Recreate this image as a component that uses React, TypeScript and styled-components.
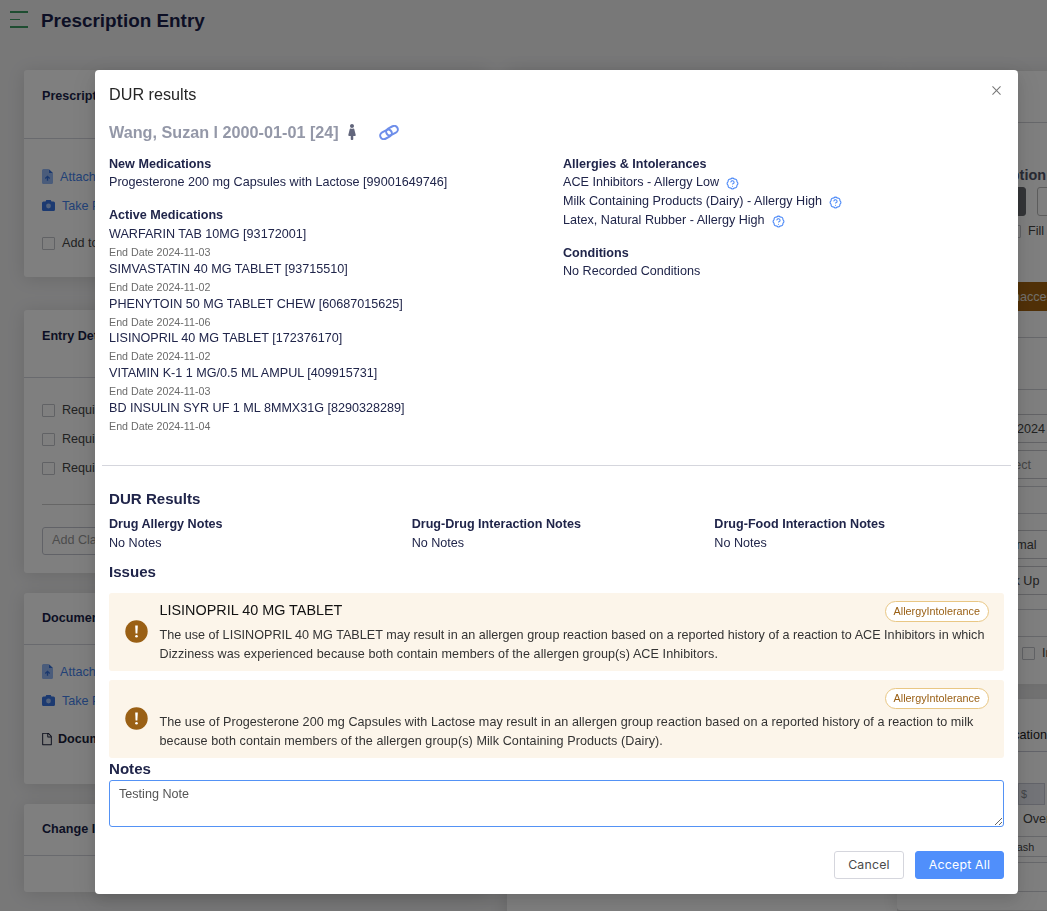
import React from 'react';
import styled, { createGlobalStyle, css } from 'styled-components';
import { FaFemale } from 'react-icons/fa';
import { AiOutlineClose, AiOutlineFile } from 'react-icons/ai';
import { BadgeQuestionMark } from 'lucide-react';

const sans = "'Liberation Sans', Helvetica, Arial, sans-serif";
const inter = "Inter, 'Liberation Sans', sans-serif";

const GlobalStyle = createGlobalStyle`
  * { box-sizing: border-box; }
  body {
    margin: 0;
    font-family: ${sans};
    font-size: 12.6px;
    color: #20254a;
    background: #f0f0f1;
    overflow: hidden;
    -webkit-font-smoothing: antialiased;
  }
  p, h1, h2, h3, h4 { margin: 0; }
`;

/* ---------- page behind the dialog ---------- */

const Page = styled.div`
  height: 911px;
  overflow: hidden;
  background: #f0f0f1;
`;

const TopBar = styled.header`
  display: flex;
  align-items: center;
  height: 40px;
  padding-left: 10px;
  gap: 13px;
`;

const PageTitle = styled.h1`
  padding-top: 1px;
  font-size: 18.9px;
  line-height: 24px;
  font-weight: 700;
  color: #1a1f4a;
`;

const Workspace = styled.main`
  display: grid;
  grid-template-columns: 483px 390px 400px;
  padding: 30px 0 0 24px;
  align-items: start;
`;

const Column = styled.div<{ $gap?: number; $top?: number; $right?: number }>`
  display: flex;
  flex-direction: column;
  gap: ${(p) => p.$gap ?? 20}px;
  padding-top: ${(p) => p.$top ?? 0}px;
  padding-right: ${(p) => p.$right ?? 0}px;
`;

const Card = styled.section<{ $height: number }>`
  height: ${(p) => p.$height}px;
  flex: none;
  overflow: hidden;
  background: #fff;
  border-radius: 3px;
  box-shadow: 0 2px 18px rgba(0, 0, 0, 0.12);
`;

const CardHead = styled.div<{ $height: number; $pad?: number }>`
  height: ${(p) => p.$height}px;
  padding: ${(p) => p.$pad ?? 17}px 0 0 18px;
  border-bottom: 1px solid #d3d4dc;
  font-weight: 700;
  line-height: 18px;
  color: #1a1f4a;
`;

const CardBody = styled.div<{ $top: number }>`
  display: flex;
  flex-direction: column;
  padding: ${(p) => p.$top}px 18px 0;
`;

const ActionLink = styled.a`
  display: flex;
  align-items: center;
  gap: 7px;
  height: 29px;
  color: #4583ee;
`;

const CheckLine = styled.label<{ $top?: number }>`
  display: flex;
  align-items: center;
  gap: 7px;
  height: 29px;
  margin-top: ${(p) => p.$top ?? 0}px;
  line-height: 13px;
  color: #444;
  white-space: nowrap;
`;

const Box = styled.span`
  width: 13px;
  height: 13px;
  flex: none;
  border: 1px solid #c3c5cb;
  border-radius: 1px;
`;

const Rule = styled.hr`
  width: 100%;
  height: 1px;
  margin: 21px 0 22px;
  border: 0;
  background: #ccc;
`;

const Field = styled.div`
  height: 28px;
  padding-left: 9px;
  border: 1px solid #c3c5cf;
  border-radius: 3px;
  line-height: 24px;
  color: #999;
`;

const DocHeading = styled.div`
  display: flex;
  align-items: center;
  gap: 4px;
  margin: 14px 0 0 -2px;
  height: 20px;
  font-weight: 700;
  color: #1a1f3a;
`;

const Slot = styled.div<{ $h: number; $left?: number; $bottom?: number; $line?: boolean; $small?: boolean }>`
  display: flex;
  align-items: center;
  height: ${(p) => p.$h}px;
  padding-left: ${(p) => p.$left ?? 0}px;
  padding-bottom: ${(p) => p.$bottom ?? 0}px;
  font-size: ${(p) => (p.$small ? 10.8 : 12.6)}px;
  white-space: nowrap;
  color: #444;
  ${(p) => p.$line && css`border-bottom: 1px solid #cfd0d6;`}
`;

const FormField = styled.div<{ $left: number; $muted?: boolean; $gap?: number }>`
  display: flex;
  align-items: center;
  height: 29px;
  margin-bottom: ${(p) => p.$gap ?? 7}px;
  padding-left: ${(p) => p.$left}px;
  border: 1px solid #c6c7cc;
  white-space: nowrap;
  color: ${(p) => (p.$muted ? '#8c8c8c' : '#444')};
`;

const OptionHeading = styled.div`
  height: 22px;
  padding-left: 65px;
  font-size: 14.4px;
  line-height: 20px;
  font-weight: 700;
  color: #515568;
`;

const CardLabel = styled.div`
  height: 53px;
  padding: 27px 0 0 89px;
  border-bottom: 1px solid #c6c8d4;
  line-height: 18px;
  color: #222;
`;

const Toggles = styled.div`
  display: flex;
  gap: 11px;
  height: 29px;
  padding-left: 70px;
`;

const Toggle = styled.span<{ $on?: boolean }>`
  width: 59px;
  border-radius: 3px;
  border: 1px solid ${(p) => (p.$on ? '#686b70' : '#bbb')};
  background: ${(p) => (p.$on ? '#686b70' : '#fff')};
`;

const Banner = styled.div`
  height: 29px;
  margin-bottom: 26px;
  padding-left: 116px;
  line-height: 30px;
  background: #a3620f;
  color: #e6e0da;
  white-space: nowrap;
`;

const Currency = styled.span`
  display: flex;
  align-items: center;
  width: 27px;
  height: 22px;
  margin-left: 121px;
  padding-left: 2px;
  border: 1px solid #c6c9d4;
  background: #e7e9f0;
  color: #85888f;
  font-size: 10.8px;
`;

/* ---------- dialog ---------- */

const Backdrop = styled.div`
  position: fixed;
  inset: 0;
  padding: 70px 0 0 95px;
  background: rgba(0, 0, 0, 0.5);
`;

const Dialog = styled.div`
  width: 923px;
  height: 824px;
  padding: 0 14px;
  border-radius: 4px;
  background: #fff;
  box-shadow: 0 5px 14px rgba(0, 0, 0, 0.1), 0 8px 26px 8px rgba(0, 0, 0, 0.06);
`;

const DialogHead = styled.div`
  display: flex;
  justify-content: space-between;
  align-items: flex-start;
  height: 50px;
  padding-top: 13px;
  color: #262626;
  font-size: 16.2px;
  line-height: 22px;
  svg { width: 13px; height: 13px; margin: 1px 1px 0 0; color: #777; }
`;

const Patient = styled.div`
  display: flex;
  align-items: center;
  height: 25px;
  margin-bottom: 9px;
  font-size: 16.2px;
  font-weight: 700;
  color: #9498a8;
`;

const PersonIcon = styled(FaFemale)`
  width: 8px;
  height: 16px;
  margin: -1px 0 0 9px;
  color: #62667c;
`;

const Columns = styled.div<{ $count: number; $height: number; $top?: number }>`
  display: grid;
  grid-template-columns: repeat(${(p) => p.$count}, 1fr);
  margin: ${(p) => p.$top ?? 0}px -13px 0 0;
  height: ${(p) => p.$height}px;
`;

const Group = styled.div`
  margin-bottom: 13px;
`;

const NoteGroup = styled.div`
  display: flex;
  flex-direction: column;
  gap: 1px;
`;

const Heading = styled.h4`
  padding-top: 2px;
  font-size: 12.6px;
  font-weight: 700;
  line-height: 17px;
`;

const Line = styled.p`
  display: flex;
  align-items: center;
  height: 19px;
  line-height: 19px;
  svg { margin: 2px 0 0 7px; color: #4a88f7; }
`;

const MedicationList = styled.div`
  padding-top: 1px;
`;

const Medication = styled.div`
  height: 34.75px;
  line-height: 18px;
`;

const EndDate = styled.p`
  padding-top: 2.2px;
  font-size: 10.7px;
  line-height: 14.7px;
  color: #6b6b6b;
`;

const Divider = styled.hr`
  height: 1px;
  margin: 0 -7px 21px;
  border: 0;
  background: #d5d6dd;
`;

const SectionTitle = styled.h3<{ $h: number; $bottom?: number }>`
  margin-bottom: ${(p) => p.$bottom ?? 0}px;
  font-size: 15.1px;
  font-weight: 700;
  line-height: ${(p) => p.$h}px;
`;

const Issue = styled.article`
  display: flex;
  height: 78px;
  margin-bottom: 9px;
  padding: 8px 15px 0 16px;
  border-radius: 3px;
  background: #fcf5ea;
  color: #333;
  &:last-child { margin-bottom: 0; }
`;

const WarningMark = styled.svg`
  flex: none;
  width: 23px;
  height: 23px;
  margin: 19px 11.5px 0 0;
`;

const IssueBody = styled.div`
  flex: 1;
`;

const IssueTop = styled.div`
  display: flex;
  justify-content: space-between;
  height: 25px;
  font-size: 14.4px;
  line-height: 18px;
  color: #111;
`;

const Tag = styled.span`
  height: 21px;
  margin-left: auto;
  padding: 0 8px;
  border: 1px solid #e9c784;
  border-radius: 11px;
  background: #fff;
  color: #9a6015;
  font-size: 10.8px;
  line-height: 19px;
`;

const IssueText = styled.p<{ $tracking: number }>`
  line-height: 19px;
  letter-spacing: ${(p) => p.$tracking}px;
  white-space: nowrap;
`;

const NotesInput = styled.textarea`
  display: block;
  width: 895px;
  height: 47px;
  padding: 4px 9px;
  border: 1px solid #5492f5;
  border-radius: 3px;
  outline: none;
  font: 12.6px/18px ${sans};
  color: #555;
`;

const Actions = styled.footer`
  display: flex;
  justify-content: flex-end;
  gap: 11px;
  margin-top: 24px;
`;

const Button = styled.button<{ $primary?: boolean }>`
  width: ${(p) => (p.$primary ? 89 : 70)}px;
  height: 28px;
  padding: 0;
  border: 1px solid ${(p) => (p.$primary ? '#508ffb' : '#d5d6dd')};
  border-radius: 3px;
  background: ${(p) => (p.$primary ? '#508ffb' : '#fff')};
  color: ${(p) => (p.$primary ? '#fff' : '#4a4a4a')};
  font: 400 12.3px/24px ${inter};
  letter-spacing: 0.22px;
`;

const MenuIcon = () => (
  <svg width="18" height="18" viewBox="0 0 18 18" stroke="#3c9a63">
    <path d="M0 1h18M0 16h18" strokeWidth="1.800" />
    <path d="M0 8.500h10" strokeWidth="1" />
  </svg>
);

const Chain = styled.svg`
  width: 20px;
  height: 15px;
  margin-left: 23px;
`;

const ChainIcon = () => (
  <Chain viewBox="0 0 20 15" fill="none" stroke="#6e8eea" strokeWidth="2">
    <rect x="0.900" y="5.800" width="12.200" height="7.200" rx="3.600" transform="rotate(-28 7 9.400)" />
    <rect x="6.900" y="2" width="12.200" height="7.200" rx="3.600" transform="rotate(-28 13 5.600)" />
  </Chain>
);

const WarningIcon = () => (
  <WarningMark viewBox="0 0 23 23">
    <circle cx="11.500" cy="11.500" r="11.200" fill="#9a6015" />
    <path d="M10.200 5.500h2.600l-.4 8h-1.800z" fill="#fff" />
    <circle cx="11.500" cy="16.300" r="1.300" fill="#fff" />
  </WarningMark>
);

const UploadIcon = () => (
  <svg width="11" height="15" viewBox="0 0 11 15">
    <path d="M1.500 0H6.500v4H11v9.500a1.500 1.500 0 0 1-1.500 1.500h-8A1.500 1.500 0 0 1 0 13.500v-12A1.500 1.500 0 0 1 1.500 0z" fill="#94b8f6" />
    <path d="M6.700 0 11 4H6.700z" fill="#3571dc" />
    <path d="M5.500 11.700V7.500M3.300 9.500l2.200-2.200 2.200 2.200" fill="none" stroke="#3571dc" strokeWidth="1.300" />
  </svg>
);

const CameraIcon = () => (
  <svg width="13" height="11" viewBox="0 0 13 11">
    <path d="M1.500 1.500h2L4.300 0h4.400l.8 1.500h2A1.500 1.500 0 0 1 13 3v6.500a1.500 1.500 0 0 1-1.500 1.500h-10A1.500 1.500 0 0 1 0 9.500V3a1.500 1.500 0 0 1 1.500-1.500z" fill="#3875e2" />
    <circle cx="6.500" cy="6" r="2.400" fill="#a9c6f8" />
  </svg>
);

const medications = [
  ['WARFARIN TAB 10MG [93172001]', '2024-11-03'],
  ['SIMVASTATIN 40 MG TABLET [93715510]', '2024-11-02'],
  ['PHENYTOIN 50 MG TABLET CHEW [60687015625]', '2024-11-06'],
  ['LISINOPRIL 40 MG TABLET [172376170]', '2024-11-02'],
  ['VITAMIN K-1 1 MG/0.5 ML AMPUL [409915731]', '2024-11-03'],
  ['BD INSULIN SYR UF 1 ML 8MMX31G [8290328289]', '2024-11-04'],
];

const allergies = [
  'ACE Inhibitors - Allergy Low',
  'Milk Containing Products (Dairy) - Allergy High',
  'Latex, Natural Rubber - Allergy High',
];

const noteGroups = ['Drug Allergy Notes', 'Drug-Drug Interaction Notes', 'Drug-Food Interaction Notes'];

const issues = [
  {
    title: 'LISINOPRIL 40 MG TABLET',
    lines: [
      { tracking: 0.01, text: 'The use of LISINOPRIL 40 MG TABLET may result in an allergen group reaction based on a reported history of a reaction to ACE Inhibitors in which' },
      { tracking: 0.072, text: 'Dizziness was experienced because both contain members of the allergen group(s) ACE Inhibitors.' },
    ],
  },
  {
    title: '',
    lines: [
      { tracking: 0.042, text: 'The use of Progesterone 200 mg Capsules with Lactose may result in an allergen group reaction based on a reported history of a reaction to milk' },
      { tracking: 0.074, text: 'because both contain members of the allergen group(s) Milk Containing Products (Dairy).' },
    ],
  },
];

const UploadLinks = () => (
  <>
    <ActionLink><UploadIcon />Attach</ActionLink>
    <ActionLink><CameraIcon />Take P</ActionLink>
  </>
);

const EntryColumn = () => (
  <Column $gap={33} $right={20}>
    <Card $height={207}>
      <CardHead $height={69}>Prescript</CardHead>
      <CardBody $top={23}>
        <UploadLinks />
        <CheckLine $top={9}><Box />Add to</CheckLine>
      </CardBody>
    </Card>
    <Column>
      <Card $height={263}>
        <CardHead $height={68}>Entry Details</CardHead>
        <CardBody $top={18}>
          <CheckLine><Box />Requires</CheckLine>
          <CheckLine><Box />Requires</CheckLine>
          <CheckLine><Box />Requires</CheckLine>
          <Rule />
          <Field>Add Claim</Field>
        </CardBody>
      </Card>
      <Card $height={191}>
        <CardHead $height={52} $pad={16}>Documents</CardHead>
        <CardBody $top={12}>
          <UploadLinks />
          <DocHeading><AiOutlineFile size={14} />Documents</DocHeading>
        </CardBody>
      </Card>
      <Card $height={88}>
        <CardHead $height={52} $pad={16}>Change Info</CardHead>
      </Card>
    </Column>
  </Column>
);

const DetailColumn = () => (
  <Column $gap={15} $top={1}>
    <Card $height={613}>
      <Slot $h={52} $line />
      <Slot $h={42} />
      <OptionHeading>Prescription</OptionHeading>
      <Toggles><Toggle $on /><Toggle /></Toggles>
      <Slot $h={30} $left={111}><Box />&nbsp;&nbsp;Fill</Slot>
      <Slot $h={36} />
      <Banner>naccessible</Banner>
      <Slot $h={1} $line />
      <Slot $h={52} $line />
      <Slot $h={24} />
      <FormField $left={119}>2024</FormField>
      <FormField $left={98} $muted>Select</FormField>
      <Slot $h={1} $line />
      <Slot $h={27} $line />
      <Slot $h={16} />
      <FormField $left={98}>Normal</FormField>
      <FormField $left={98} $gap={14}>Pick Up</FormField>
      <Slot $h={1} $line />
      <Slot $h={27} $line />
      <Slot $h={32} $left={125}><Box />&nbsp;&nbsp;In</Slot>
    </Card>
    <Card $height={211}>
      <CardLabel>Medication</CardLabel>
      <Slot $h={31} />
      <Currency>$</Currency>
      <Slot $h={32} $left={126} $bottom={4} $line>Over</Slot>
      <Slot $h={20} $left={112} $line $small>Cash</Slot>
      <Slot $h={6} $line />
      <Slot $h={29} $line />
    </Card>
  </Column>
);

const DurDialog = () => (
  <Dialog role="dialog" aria-label="DUR results">
    <DialogHead>DUR results<AiOutlineClose /></DialogHead>
    <Patient>Wang, Suzan l 2000-01-01 [24]<PersonIcon /><ChainIcon /></Patient>
    <Columns $count={2} $height={311}>
      <div>
        <Group>
          <Heading>New Medications</Heading>
          <Line>Progesterone 200 mg Capsules with Lactose [99001649746]</Line>
        </Group>
        <Heading>Active Medications</Heading>
        <MedicationList>
          {medications.map(([name, end]) => (
            <Medication key={name}>
              {name}
              <EndDate>End Date {end}</EndDate>
            </Medication>
          ))}
        </MedicationList>
      </div>
      <div>
        <Group>
          <Heading>Allergies &amp; Intolerances</Heading>
          {allergies.map((name) => (
            <Line key={name}>{name}<BadgeQuestionMark size={13} /></Line>
          ))}
        </Group>
        <Heading>Conditions</Heading>
        <Line>No Recorded Conditions</Line>
      </div>
    </Columns>
    <Divider />
    <SectionTitle $h={24}>DUR Results</SectionTitle>
    <Columns $count={3} $height={46} $top={3}>
      {noteGroups.map((name) => (
        <NoteGroup key={name}>
          <Heading>{name}</Heading>
          <Line>No Notes</Line>
        </NoteGroup>
      ))}
    </Columns>
    <SectionTitle $h={24} $bottom={9}>Issues</SectionTitle>
    <div>
      {issues.map((issue) => (
        <Issue key={issue.lines[0].text}>
          <WarningIcon />
          <IssueBody>
            <IssueTop>{issue.title}<Tag>AllergyIntolerance</Tag></IssueTop>
            {issue.lines.map(({ tracking, text }) => (
              <IssueText key={text} $tracking={tracking}>{text}</IssueText>
            ))}
          </IssueBody>
        </Issue>
      ))}
    </div>
    <SectionTitle $h={22}>Notes</SectionTitle>
    <NotesInput defaultValue="Testing Note" />
    <Actions>
      <Button>Cancel</Button>
      <Button $primary>Accept All</Button>
    </Actions>
  </Dialog>
);

export default function App() {
  return (
    <>
      <GlobalStyle />
      <Page>
        <TopBar><MenuIcon /><PageTitle>Prescription Entry</PageTitle></TopBar>
        <Workspace>
          <EntryColumn />
          <Card $height={860} />
          <DetailColumn />
        </Workspace>
      </Page>
      <Backdrop><DurDialog /></Backdrop>
    </>
  );
}
